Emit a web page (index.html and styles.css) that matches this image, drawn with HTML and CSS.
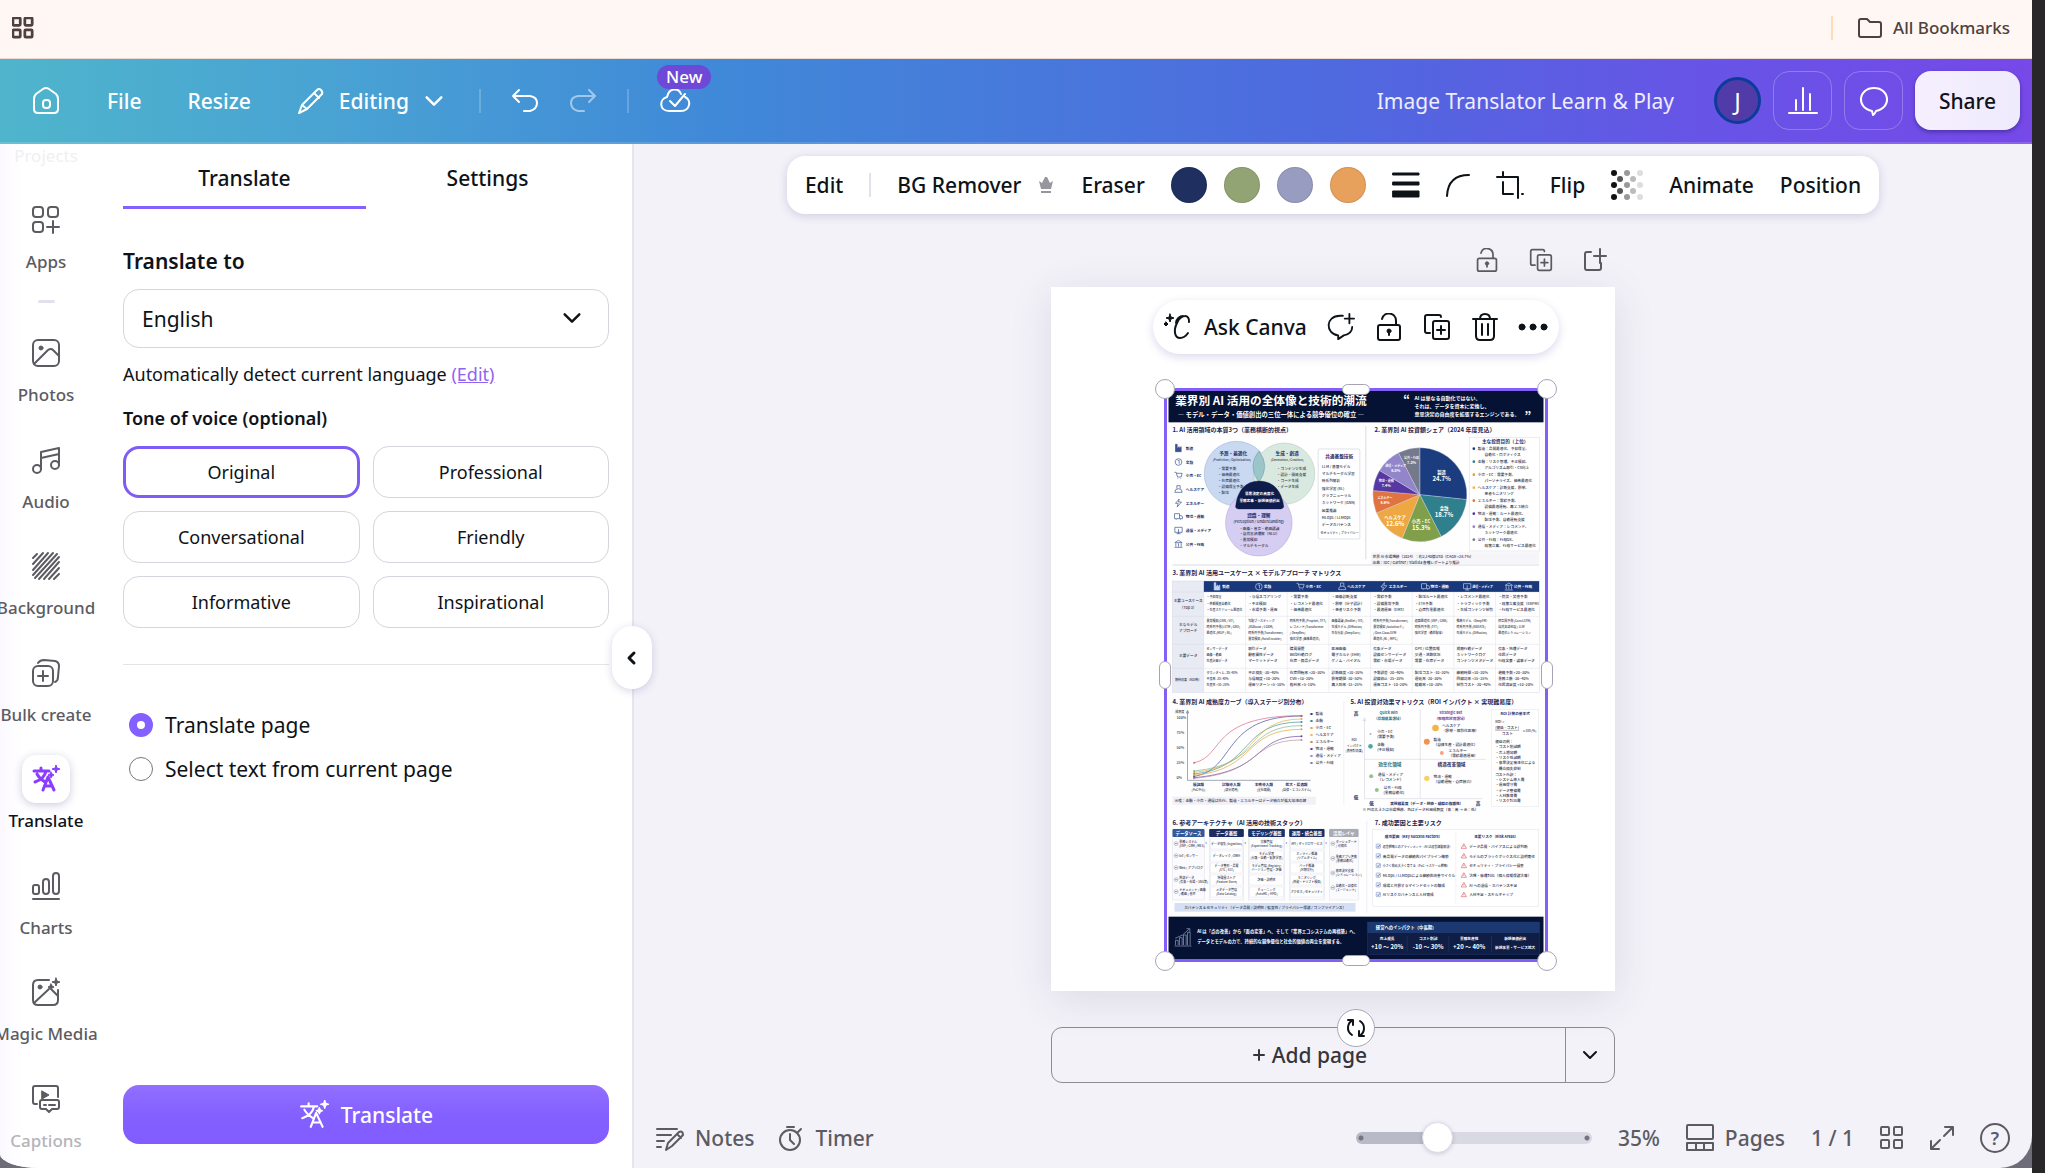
FILE: index.html
```html
<!DOCTYPE html>
<html lang="en">
<head>
    <meta charset="UTF-8">
    <meta name="viewport" content="width=device-width, initial-scale=1.0">
    <title>Image Translator Learn &amp; Play</title>
    <link rel="stylesheet" href="styles.css">
</head>
<body>
    <!-- Shared icons -->
    <svg class="sprite" aria-hidden="true">
        <symbol id="i-translate" viewBox="0 0 28 28">
            <path d="M2 6h15M9 3v3M14 6c-1 5-5 9-11 11M5 9c2 4 5 6 8 8M11 25l5-13 6 13M13 21h7"/>
            <path class="fill" d="M24 0l1 3 3 1-3 1-1 3-1-3-3-1 3-1zM19 7l1 2 2 1-2 1-1 2-1-2-2-1 2-1z"/>
        </symbol>
        <symbol id="i-chevron" viewBox="0 0 18 18"><path d="M3 6l6 6 6-6"/></symbol>
        <symbol id="i-lock" viewBox="0 0 28 28">
            <rect x="3" y="12" width="22" height="15" rx="2"/>
            <path d="M7 6c2-8 14-7 14 2v4M14 19v3"/><circle class="fill" cx="14" cy="18" r="2"/>
        </symbol>
        <symbol id="i-copy" viewBox="0 0 28 28">
            <path d="M7 20H4q-2 0-2-2V4q0-2 2-2h12q2 0 2 2"/>
            <rect x="10" y="8" width="16" height="18" rx="2"/><path d="M18 13v8M14 17h8"/>
        </symbol>
        <symbol id="i-grid" viewBox="0 0 24 24">
            <rect x="1" y="1" width="8" height="8" rx="1"/><rect x="14" y="1" width="8" height="8" rx="1"/>
            <rect x="1" y="14" width="8" height="8" rx="1"/><rect x="14" y="14" width="8" height="8" rx="1"/>
        </symbol>
    </svg>

    <div class="screen">
        <div class="bookmarks">
            <button class="plain" aria-label="Apps"><svg class="icon bold s22"><use href="#i-grid"/></svg></button>
            <button class="plain all-bookmarks">
                <svg class="icon s26" viewBox="0 0 26 26"><path d="M2 6q0-2 2-2h6l3 3h9q2 0 2 2v11q0 2-2 2H4q-2 0-2-2z"/></svg>
                All Bookmarks
            </button>
        </div>

        <div class="window">
            <!-- Header -->
            <header class="header">
                <nav class="menu">
                    <button class="plain" aria-label="Home"><svg class="icon s30" viewBox="0 0 30 30"><path d="M3 13q0-3 2-5l7-5q3-2 6 0l7 5q2 2 2 5v10q0 4-4 4H7q-4 0-4-4z"/><rect x="12" y="14" width="7" height="8" rx="3"/></svg></button>
                    <button class="plain">File</button>
                    <button class="plain">Resize</button>
                    <button class="plain editing">
                        <svg class="icon s28" viewBox="0 0 28 28"><path d="M2 26l3-8L20 3q2-2 4 0t1 4L10 22zM17 6l5 5M5 18l5 4"/></svg>
                        Editing
                        <svg class="icon s22"><use href="#i-chevron"/></svg>
                    </button>
                </nav>
                <div class="history">
                    <span class="line"></span>
                    <button class="plain" aria-label="Undo"><svg class="icon s28" viewBox="0 0 28 28"><path d="M8 3L2 9l6 6M2 9h17q7 1 7 7t-7 8h-6"/></svg></button>
                    <button class="plain dim" aria-label="Redo"><svg class="icon s28" viewBox="0 0 28 28"><path d="M20 3l6 6-6 6M26 9H9q-7 1-7 7t7 8h6"/></svg></button>
                    <span class="line"></span>
                    <button class="plain saved" aria-label="Saved">
                        <svg class="icon s32" viewBox="0 0 32 32"><path d="M22 9C20 3 10 2 8 12c-8 2-8 14 2 14h12c9 0 11-11 4-14M11 16l5 5 10-12"/></svg>
                        <span class="badge">New</span>
                    </button>
                </div>
                <div class="account">
                    <span class="doc-title">Image Translator Learn &amp; Play</span>
                    <button class="avatar">J</button>
                    <button class="outline" aria-label="Insights"><svg class="icon s30" viewBox="0 0 30 30"><path d="M1 27h28M8 24V14M15 24V2M22 24V8"/></svg></button>
                    <button class="outline" aria-label="Comments"><svg class="icon s30" viewBox="0 0 30 30"><path d="M13 25C-3 22-1 2 15 2s18 20 2 23q-1 3-3 4z"/></svg></button>
                    <button class="share">Share</button>
                </div>
            </header>

            <div class="workspace">
                <!-- Rail -->
                <nav class="rail">
                    <span class="rail-faded">Projects</span>
                    <button class="rail-item">
                        <span class="tile"><svg class="icon s28" viewBox="0 0 28 28"><rect x="1" y="1" width="10" height="10" rx="3"/><rect x="16" y="1" width="10" height="10" rx="3"/><rect x="1" y="16" width="10" height="10" rx="3"/><path d="M21 15v12M15 21h12"/></svg></span>
                        Apps
                    </button>
                    <span class="rail-dash"></span>
                    <div class="rail-list">
                        <button class="rail-item">
                            <span class="tile"><svg class="icon s28" viewBox="0 0 28 28"><rect x="1" y="1" width="26" height="26" rx="5"/><circle class="fill" cx="9" cy="9" r="2"/><path d="M2 25L16 11q3-2 5 0l6 6"/></svg></span>
                            Photos
                        </button>
                        <button class="rail-item">
                            <span class="tile"><svg class="icon s28" viewBox="0 0 28 28"><circle cx="5" cy="23" r="4"/><circle cx="23" cy="19" r="4"/><path d="M9 23V6l18-4v17M9 12l18-4"/></svg></span>
                            Audio
                        </button>
                        <button class="rail-item">
                            <span class="tile"><svg class="icon s28" viewBox="0 0 28 28"><path d="M1 6l4-4M1 12L11 1M1 18L16 1M1 23L21 1M3 26L25 2M7 27L27 5M12 27l15-17M17 27l10-11M22 27l5-5"/></svg></span>
                            Background
                        </button>
                        <button class="rail-item">
                            <span class="tile"><svg class="icon s28" viewBox="0 0 28 28"><rect x="1" y="7" width="20" height="20" rx="5"/><path d="M6 4q2-3 6-3l11 1q4 1 4 5l-1 11q0 4-3 5M11 12v10M6 17h10"/></svg></span>
                            Bulk create
                        </button>
                        <button class="rail-item active">
                            <span class="tile"><svg class="icon bold s28"><use href="#i-translate"/></svg></span>
                            Translate
                        </button>
                        <button class="rail-item">
                            <span class="tile"><svg class="icon s28" viewBox="0 0 28 28"><rect x="1" y="13" width="6" height="9" rx="2"/><rect x="11" y="7" width="6" height="15" rx="3"/><rect x="21" y="1" width="6" height="21" rx="3"/><path d="M1 27h26"/></svg></span>
                            Charts
                        </button>
                        <button class="rail-item">
                            <span class="tile"><svg class="icon s28" viewBox="0 0 28 28"><path d="M17 2H6Q1 2 1 7v15q0 5 5 5h15q5 0 5-5V12M2 25l15-14M20 12l6 6"/><circle class="fill" cx="8" cy="9" r="2"/><path class="fill" d="M24 0l1 3 3 1-3 1-1 3-1-3-3-1 3-1zM19 6l1 2 2 1-2 1-1 2-1-2-2-1 2-1z"/></svg></span>
                            Magic Media
                        </button>
                        <button class="rail-item faded">
                            <span class="tile"><svg class="icon s28" viewBox="0 0 28 28"><path d="M5 19H3q-2 0-2-2V3q0-2 2-2h21q2 0 2 2v9"/><path class="fill" d="M10 6l7 4-7 4z"/><path d="M10 15h15q2 0 2 2v5q0 2-2 2h-5l-3 3-3-3h-4q-2 0-2-2v-5q0-2 2-2zM12 20h2M17 20h6"/></svg></span>
                            Captions
                        </button>
                    </div>
                </nav>

                <!-- Translate panel -->
                <section class="panel">
                    <div class="tabs">
                        <button class="tab selected">Translate</button>
                        <button class="tab">Settings</button>
                    </div>
                    <label class="field-label" for="language">Translate to</label>
                    <div class="select-wrap">
                        <select id="language">
                            <option>English</option>
                        </select>
                        <svg class="icon s22"><use href="#i-chevron"/></svg>
                    </div>
                    <p class="detect">Automatically detect current language <a href="#edit">(Edit)</a></p>
                    <h3 class="tone-title">Tone of voice (optional)</h3>
                    <div class="tones">
                        <button class="tone chosen">Original</button>
                        <button class="tone">Professional</button>
                        <button class="tone">Conversational</button>
                        <button class="tone">Friendly</button>
                        <button class="tone">Informative</button>
                        <button class="tone">Inspirational</button>
                    </div>
                    <div class="scope">
                        <label><input type="radio" name="scope" checked> Translate page</label>
                        <label><input type="radio" name="scope"> Select text from current page</label>
                    </div>
                    <button class="translate-button">
                        <svg class="icon s30"><use href="#i-translate"/></svg>
                        Translate
                    </button>
                    <button class="collapse" aria-label="Hide panel"><svg class="icon bold s18" viewBox="0 0 18 18"><path d="M11 4L6 9l5 5"/></svg></button>
                </section>

                <!-- Canvas -->
                <main class="canvas">
                    <div class="toolbar">
                        <button class="plain">Edit</button>
                        <span class="line"></span>
                        <button class="plain remover">BG Remover
                            <svg class="crown" viewBox="0 0 16 18"><path d="M1 5l3 2 3-6h2l3 6 3-2-2 8H3zM3 15h10v2H3z"/></svg>
                        </button>
                        <button class="plain">Eraser</button>
                        <div class="swatches">
                            <button class="swatch navy" aria-label="Navy"></button>
                            <button class="swatch green" aria-label="Green"></button>
                            <button class="swatch lilac" aria-label="Lilac"></button>
                            <button class="swatch orange" aria-label="Orange"></button>
                        </div>
                        <button class="plain" aria-label="Line weight"><svg class="icon s28" viewBox="0 0 28 28"><path class="fill" d="M1 2h26v2H1zM1 11h26v3H1zM1 20h26v6H1z"/></svg></button>
                        <button class="plain" aria-label="Corners"><svg class="icon s24" viewBox="0 0 24 24"><path d="M1 23Q2 2 23 2"/></svg></button>
                        <button class="plain" aria-label="Crop"><svg class="icon s28" viewBox="0 0 28 28"><path d="M1 6h21v21M7 1v4M7 11v12h10M26 23h1"/></svg></button>
                        <button class="plain">Flip</button>
                        <button class="plain" aria-label="Transparency"><svg class="checker" viewBox="0 0 32 32">
                            <g fill="#111"><circle cx="3" cy="4" r="3"/><circle cx="3" cy="16" r="3"/><circle cx="3" cy="28" r="3"/></g>
                            <g fill="#555"><circle cx="9" cy="10" r="3"/><circle cx="9" cy="22" r="3"/></g>
                            <g fill="#999"><circle cx="16" cy="4" r="3"/><circle cx="16" cy="16" r="3"/><circle cx="16" cy="28" r="3"/></g>
                            <g fill="#bbb"><circle cx="22" cy="10" r="3"/><circle cx="22" cy="22" r="3"/></g>
                            <g fill="#ddd"><circle cx="29" cy="4" r="3"/><circle cx="29" cy="16" r="3"/><circle cx="29" cy="28" r="3"/></g>
                        </svg></button>
                        <button class="plain">Animate</button>
                        <button class="plain">Position</button>
                    </div>

                    <div class="board">
                        <div class="page-tools">
                            <button class="plain" aria-label="Lock page"><svg class="icon s24"><use href="#i-lock"/></svg></button>
                            <button class="plain" aria-label="Duplicate page"><svg class="icon s24"><use href="#i-copy"/></svg></button>
                            <button class="plain" aria-label="New page"><svg class="icon s24" viewBox="0 0 24 24"><path d="M8 4H4Q2 4 2 6v14q0 2 2 2h12q2 0 2-2v-5M17 1v14M11 8h12"/></svg></button>
                        </div>

                        <div class="artboard">
                            <div class="quick-bar">
                                <button class="plain ask">
                                    <svg class="icon bold s28" viewBox="0 0 28 28"><path d="M26 9c1-8-8-8-12 1-4 8-2 15 3 15 4 0 6-2 8-5M20 3c-3 0-7 3-7 7"/><path class="fill" d="M7 1l1 3 3 1-3 1-1 3-1-3-3-1 3-1zM3 9l1 1 1 1-1 1-1 1-1-1-1-1 1-1z"/></svg>
                                    Ask Canva
                                </button>
                                <button class="plain" aria-label="Comment"><svg class="icon bold s28" viewBox="0 0 30 30"><path d="M17 3H14C-2 3-2 22 12 24v4l6-4q9-2 9-9M24 1v10M19 6h10"/></svg></button>
                                <button class="plain" aria-label="Lock"><svg class="icon bold s28"><use href="#i-lock"/></svg></button>
                                <button class="plain" aria-label="Duplicate"><svg class="icon bold s28"><use href="#i-copy"/></svg></button>
                                <button class="plain" aria-label="Delete"><svg class="icon bold s28" viewBox="0 0 28 28"><path d="M2 6h24M9 6q0-5 5-5t5 5M5 6v17q0 4 4 4h10q4 0 4-4V6M11 11v11M17 11v11"/></svg></button>
                                <button class="plain" aria-label="More"><svg class="icon s28" viewBox="0 0 28 28"><g class="fill"><circle cx="3" cy="14" r="3"/><circle cx="14" cy="14" r="3"/><circle cx="25" cy="14" r="3"/></g></svg></button>
                            </div>

                            <div class="selection">
                                <svg class="poster" id="poster" viewBox="0 0 1125 1704"></svg>
                                <span class="handle nw"></span><span class="handle ne"></span>
                                <span class="handle sw"></span><span class="handle se"></span>
                                <span class="pill top"></span><span class="pill bottom"></span>
                                <span class="pill left"></span><span class="pill right"></span>
                                <button class="rotate" aria-label="Rotate"><svg class="icon s20" viewBox="0 0 20 20"><path d="M2 2h5v5M7 2C1 5 0 13 6 17M18 18h-5v-5M13 18c6-3 7-11 1-15"/></svg></button>
                            </div>
                        </div>

                        <div class="add-page">
                            <button class="add"><svg class="icon s18" viewBox="0 0 18 18"><path d="M9 4v10M4 9h10"/></svg>Add page</button>
                            <button class="add-more" aria-label="Page types"><svg class="icon s18"><use href="#i-chevron"/></svg></button>
                        </div>
                    </div>

                    <footer class="status">
                        <button class="plain"><svg class="icon s28" viewBox="0 0 28 28"><path d="M1 5h20M1 11h14M1 17h7M1 23h4M10 26l2-7L23 8q2-1 3 0t1 3L16 22zM21 10l4 4"/></svg>Notes</button>
                        <button class="plain"><svg class="icon s26" viewBox="0 0 26 26"><circle cx="12" cy="15" r="10"/><path d="M9 2h7M20 7l3-3M12 9v6l4 4"/></svg>Timer</button>
                        <div class="status-right">
                            <input class="zoom" type="range" min="0" max="100" value="32" aria-label="Zoom">
                            <button class="plain">35%</button>
                            <button class="plain"><svg class="icon s28" viewBox="0 0 28 28"><rect x="1" y="1" width="26" height="14" rx="1"/><path d="M1 19h26v7H1zM10 19v7M18 19v7"/></svg>Pages</button>
                            <button class="plain">1 / 1</button>
                            <button class="plain" aria-label="Grid view"><svg class="icon s24"><use href="#i-grid"/></svg></button>
                            <button class="plain" aria-label="Full screen"><svg class="icon s24" viewBox="0 0 24 24"><path d="M15 1h8v8M23 1l-9 9M9 23H1v-8M1 23l9-9"/></svg></button>
                            <button class="help" aria-label="Help">?</button>
                        </div>
                    </footer>
                </main>
            </div>
        </div>
    </div>
    <script src="poster.js"></script>
</body>
</html>
```
FILE: styles.css
```css
* {
    box-sizing: border-box;
}
body {
    margin: 0;
    height: 100vh;
    font-family: "Noto Sans", "Noto Sans CJK JP", sans-serif;
    font-size: 21px;
    color: #0e1318;
    background-color: #fff;
    border-right: 13px solid #29272a;
    overflow: hidden;
}
button, select, input {
    font: inherit;
    color: inherit;
    margin: 0;
}
button {
    display: flex;
    align-items: center;
    justify-content: center;
    padding: 0;
    border: none;
    background: none;
    cursor: pointer;
    white-space: nowrap;
}
.plain {
    font-weight: 500;
}
.sprite {
    display: none;
}
.icon {
    display: block;
    flex: none;
    fill: none;
    stroke: currentColor;
    stroke-width: 2px;
    stroke-linecap: round;
    stroke-linejoin: round;
    overflow: visible;
}
.fill {
    fill: currentColor;
    stroke-width: 1px;
}
.bold {
    stroke-width: 3px;
}
.s18 { width: 18px; height: 18px; }
.s20 { width: 20px; height: 20px; }
.s22 { width: 22px; height: 22px; }
.s24 { width: 24px; height: 24px; }
.s26 { width: 26px; height: 26px; }
.s28 { width: 28px; height: 28px; }
.s30 { width: 30px; height: 30px; }
.s32 { width: 32px; height: 32px; }

.screen {
    display: flex;
    flex-direction: column;
    height: 100%;
    padding-bottom: 5px;
    background-color: #fff;
}
.bookmarks {
    display: flex;
    align-items: center;
    justify-content: space-between;
    height: 59px;
    padding: 0 22px 3px 12px;
    background-color: #fff7f3;
    border-bottom: 1px solid #ecd9d0;
    color: #4e4140;
}
.all-bookmarks {
    gap: 10px;
    height: 24px;
    padding-left: 24px;
    border-left: 2px solid #ffdcb8;
    font-size: 17px;
}
.window {
    flex: 1;
    display: flex;
    flex-direction: column;
    min-height: 0;
    background-color: #6d6c78;
}

/* Header */
.header {
    display: flex;
    align-items: center;
    height: 85px;
    padding: 0 12px 0 31px;
    color: #fff;
    background: linear-gradient(90deg, #4fb5cc 0%, #49a3d3 16%, #4089d8 35%, #4f69df 66%, #6754e6 84%, #7649e8 100%);
    border-bottom: 2px solid rgba(255, 255, 255, 0.15);
}
.menu {
    display: flex;
    align-items: center;
    gap: 46px;
}
.editing {
    gap: 14px;
}
.history {
    display: flex;
    align-items: center;
    gap: 30px;
    margin-left: 34px;
}
.line {
    width: 2px;
    height: 24px;
    background-color: rgba(255, 255, 255, 0.2);
}
.dim {
    opacity: 0.5;
}
.saved {
    position: relative;
}
.badge {
    position: absolute;
    left: -2px;
    bottom: 28px;
    padding: 0 9px;
    border-radius: 12px;
    background-color: #6e48d6;
    font-size: 17px;
    line-height: 24px;
}
.account {
    display: flex;
    align-items: center;
    gap: 12px;
    margin-left: auto;
}
.doc-title {
    margin-right: 28px;
    color: #f0edff;
}
.avatar {
    width: 47px;
    height: 47px;
    border: 3px solid #0b3c9c;
    border-radius: 50%;
    background-color: #503ba8;
    font-size: 24px;
}
.outline {
    width: 59px;
    height: 59px;
    border: 1px solid rgba(255, 255, 255, 0.25);
    border-radius: 16px;
}
.share {
    width: 105px;
    height: 59px;
    border-radius: 16px;
    background: linear-gradient(90deg, #f6effe, #eeebfd);
    box-shadow: 0 2px 4px rgba(20, 10, 80, 0.4);
    color: #0e1318;
    font-weight: 500;
}

.workspace {
    flex: 1;
    display: flex;
    min-height: 0;
    border-radius: 0 0 32px 40px / 0 0 32px 14px;
    overflow: hidden;
    background-color: #f3f2f9;
}

/* Rail */
.rail {
    display: flex;
    flex-direction: column;
    align-items: center;
    width: 98px;
    padding: 0 6px 15px 0;
    background: linear-gradient(90deg, #fbf9ff, #fff 24px);
    overflow: hidden;
}
.rail-faded {
    font-size: 17px;
    line-height: 24px;
    color: #f0eff2;
}
.rail-item {
    flex-direction: column;
    gap: 6px;
    font-size: 17px;
    font-weight: 500;
    line-height: 24px;
    color: #5c5b62;
}
.rail > .rail-item {
    margin-top: 28px;
}
.tile {
    display: flex;
    align-items: center;
    justify-content: center;
    width: 48px;
    height: 48px;
    border-radius: 14px;
}
.rail-dash {
    width: 17px;
    height: 3px;
    margin: 26px 0;
    border-radius: 2px;
    background-color: #e2e0ea;
}
.rail-list {
    flex: 1;
    display: flex;
    flex-direction: column;
    align-items: center;
    justify-content: space-between;
}
.active {
    color: #0e1318;
}
.active .tile {
    color: #8b3dff;
    background-color: #fff;
    box-shadow: 0 2px 8px rgba(60, 50, 130, 0.25);
}
.faded {
    color: #b5b4ba;
}
.faded .tile {
    color: #5c5b62;
}

/* Panel */
.panel {
    position: relative;
    z-index: 2;
    display: flex;
    flex-direction: column;
    width: 536px;
    padding: 0 23px 24px 25px;
    background-color: #fff;
    border-right: 2px solid #e6e5ed;
}
.tabs {
    display: grid;
    grid-template-columns: 1fr 1fr;
    height: 65px;
}
.tab {
    padding-top: 6px;
    font-weight: 500;
    border-bottom: 3px solid transparent;
}
.selected {
    border-color: #8360ff;
}
.field-label {
    margin: 38px 0 14px;
    line-height: 28px;
    font-weight: 600;
}
.select-wrap {
    position: relative;
}
.select-wrap select {
    width: 100%;
    height: 59px;
    padding: 0 18px;
    appearance: none;
    background-color: #fff;
    border: 1px solid #d6d5dd;
    border-radius: 16px;
}
.select-wrap .icon {
    position: absolute;
    right: 26px;
    top: 18px;
    pointer-events: none;
}
.detect {
    margin: 14px 0 20px;
    font-size: 18px;
    line-height: 24px;
}
.detect a {
    color: #9063f2;
}
.tone-title {
    margin: 0 0 16px;
    font-size: 18px;
    line-height: 24px;
    font-weight: 600;
}
.tones {
    display: grid;
    grid-template-columns: 1fr 1fr;
    gap: 13px;
    padding-bottom: 36px;
    border-bottom: 1px solid #e4e4e8;
}
.tone {
    height: 52px;
    border: 1px solid #d6d5dd;
    border-radius: 16px;
    font-size: 18px;
}
.chosen {
    border: 3px solid #7f5cf5;
}
.scope {
    display: flex;
    flex-direction: column;
    gap: 16px;
    padding: 46px 6px;
    line-height: 28px;
}
.scope label {
    display: flex;
    align-items: center;
    gap: 12px;
}
.scope input {
    width: 24px;
    height: 24px;
    appearance: none;
    border: 1px solid #77767e;
    border-radius: 50%;
}
.scope input:checked {
    border: 8px solid #8360ff;
}
.translate-button {
    gap: 12px;
    height: 59px;
    margin-top: auto;
    border-radius: 16px;
    background: linear-gradient(#9370ff, #8360ff 50%, #825cff);
    color: #fff;
    font-weight: 500;
}
.collapse {
    position: absolute;
    right: -20px;
    top: 482px;
    width: 40px;
    height: 63px;
    border-radius: 20px;
    background-color: #fff;
    box-shadow: 0 2px 8px rgba(60, 50, 130, 0.2);
}

/* Canvas */
.canvas {
    flex: 1;
    display: flex;
    flex-direction: column;
    align-items: center;
    min-width: 0;
    padding: 12px 22px 14px;
}
.toolbar {
    display: flex;
    align-items: center;
    gap: 26px;
    height: 58px;
    padding: 0 18px;
    border-radius: 18px;
    background-color: #fff;
    box-shadow: 0 2px 10px rgba(60, 60, 130, 0.2);
}
.toolbar .line {
    background-color: #e2e2e8;
}
.remover {
    gap: 16px;
}
.crown {
    width: 18px;
    height: 18px;
    fill: #97969f;
}
.swatches {
    display: flex;
    gap: 17px;
}
.swatch {
    width: 36px;
    height: 36px;
    border: 1px solid rgba(0, 0, 0, 0.1);
    border-radius: 50%;
}
.navy { background-color: #1f3060; }
.green { background-color: #93a474; }
.lilac { background-color: #979cc0; }
.orange { background-color: #e8a15c; }
.checker {
    width: 32px;
    height: 32px;
}
.board {
    width: 564px;
}
.page-tools {
    display: flex;
    justify-content: flex-end;
    gap: 30px;
    padding: 34px 8px 15px;
    color: #5c5b62;
}
.artboard {
    position: relative;
    height: 704px;
    background-color: #fff;
    box-shadow: 0 8px 40px rgba(60, 60, 80, 0.12);
}
.quick-bar {
    position: absolute;
    left: 102px;
    top: 13px;
    z-index: 3;
    display: flex;
    align-items: center;
    gap: 20px;
    height: 54px;
    padding: 0 12px 0 10px;
    border-radius: 27px;
    background-color: #fff;
    box-shadow: 0 3px 10px rgba(80, 60, 160, 0.2);
}
.quick-bar .bold {
    stroke-width: 2px;
}
.ask {
    gap: 13px;
}
.selection {
    position: absolute;
    left: 113px;
    top: 101px;
    z-index: 2;
    border: 3px solid #8360f5;
}
.poster {
    display: block;
    width: 378px;
    height: 568px;
    background-color: #fefefe;
}
.handle, .pill {
    position: absolute;
    background-color: #fff;
    border: 1px solid #a6a4b4;
    border-radius: 10px;
}
.handle {
    width: 20px;
    height: 20px;
}
.nw { left: -12px; top: -12px; }
.ne { right: -12px; top: -12px; }
.sw { left: -12px; bottom: -12px; }
.se { right: -12px; bottom: -12px; }
.top, .bottom {
    left: calc(50% - 14px);
    width: 28px;
    height: 11px;
}
.top { top: -7px; }
.bottom { bottom: -7px; }
.left, .right {
    top: calc(50% - 14px);
    width: 12px;
    height: 28px;
}
.left { left: -8px; }
.right { right: -8px; }
.rotate {
    position: absolute;
    left: calc(50% - 19px);
    bottom: -88px;
    width: 38px;
    height: 38px;
    border: 1px solid #aaa8b8;
    border-radius: 50%;
    background-color: #fff;
}
.add-page {
    display: flex;
    height: 56px;
    margin-top: 36px;
    border: 1px solid #8d8b96;
    border-radius: 11px;
}
.add {
    flex: 1;
    gap: 4px;
    font-weight: 500;
    color: #36353c;
}
.add-more {
    width: 49px;
    border-left: 1px solid #8d8b96;
}

/* Status bar */
.status {
    display: flex;
    align-items: center;
    gap: 24px;
    width: 100%;
    margin-top: auto;
    color: #5c5b62;
}
.status .plain {
    gap: 11px;
}
.status-right {
    display: flex;
    align-items: center;
    gap: 26px;
    margin-left: auto;
}
.zoom {
    width: 236px;
    height: 32px;
    appearance: none;
    background: none;
}
.zoom::-webkit-slider-runnable-track {
    height: 12px;
    border-radius: 6px;
    background:
        radial-gradient(circle at 5px 6px, #74737e 2px, transparent 3px),
        radial-gradient(circle at 231px 6px, #74737e 2px, transparent 3px),
        linear-gradient(90deg, #b9bac7 35%, #d9d9e3 35%);
}
.zoom::-webkit-slider-thumb {
    appearance: none;
    width: 31px;
    height: 31px;
    margin-top: -10px;
    border: 1px solid #dddde6;
    border-radius: 50%;
    background-color: #fff;
    box-shadow: 0 1px 4px rgba(50, 50, 90, 0.2);
}
.help {
    width: 30px;
    height: 30px;
    border: 2px solid #5c5b62;
    border-radius: 50%;
    font-size: 18px;
    font-weight: 600;
}

/* Poster artwork */
.poster text {
    font-family: "Noto Sans CJK JP", sans-serif;
    font-size: 13px;
    font-weight: 500;
    fill: #33364d;
}
.poster .h { font-size: 18px; font-weight: 700; fill: #1c2350; }
.poster .b { font-size: 14px; font-weight: 700; fill: #1c2c66; }
.poster .s { font-size: 11px; }
.poster .xs { font-size: 9px; }
.poster .w { font-weight: 700; fill: #fff; }
.poster .title { font-size: 35px; }
.poster .sub { font-size: 19px; }
.poster .big { font-size: 18px; }
.poster .quote { font-size: 15px; }
.poster .mid { text-anchor: middle; }
.poster .teal { fill: #28717e; }
.poster .purple { fill: #7445a4; }
```
FILE: poster.js
```js
const poster = document.getElementById("poster");
const NS = "http://www.w3.org/2000/svg";
const sectors = ["製造", "金融", "小売・EC", "ヘルスケア", "エネルギー", "物流・運輸", "通信・メディア", "公共・行政"];
const colors = ["#17388a", "#2b7f92", "#d8a13c", "#f5b13d", "#e2703a", "#5131a5", "#9080cf", "#747a8c"];

function add(tag, attrs, content) {
    const el = document.createElementNS(NS, tag);
    for (const key in attrs) el.setAttribute(key, attrs[key]);
    if (content) el.textContent = content;
    poster.appendChild(el);
}
function rect(x, y, width, height, fill, stroke = "none", rx = 0) {
    add("rect", { x, y, width, height, fill, stroke, rx });
}
function circle(cx, cy, r, fill, stroke = "none") {
    add("circle", { cx, cy, r, fill, stroke });
}
function path(d, stroke, width = 1, fill = "none") {
    add("path", { d, stroke, fill, "stroke-width": width });
}
// Writes one line of text per entry, step units apart
function text(x, y, lines, cls = "", step = 20) {
    [].concat(lines).forEach((line, i) => add("text", { x, y: y + i * step, class: cls }, line));
}
// One line icon per sector, centred on x, y
function sectorIcon(i, x, y, color) {
    const shapes = [
        "M-9 10v-22h5v12l6-5v5l6-5v15z",
        "M-10 0a10 10 0 1 0 20 0a10 10 0 1 0 -20 0M-3-5h5v10",
        "M-12-10h5l4 14H8l3-11H-6M-3 9h2M6 9h2",
        "M-5-2v-9H5v9M-11 9Q-11-2 0-2T11 9z",
        "M2-12L-9 1h8l-3 11L9-3H0z",
        "M-12-9H3V6h-15zM3-3h6l3 4v5H3M-7 8v2M6 8v2",
        "M-11-9h22V6h-22zM0-4v14M-6 10H6",
        "M-11-4L0-11l11 7zM-8-2V8M0-2V8M8-2V8M-12 10h24"
    ];
    add("path", { d: shapes[i], stroke: color, fill: i === 0 ? color : "none", "stroke-width": 2, transform: `translate(${x} ${y})` });
}

// Banner
rect(0, 0, 1125, 94, "#061234");
text(20, 43, "業界別 AI 活用の全体像と技術的潮流", "w title");
text(28, 79, "― モデル・データ・価値創出の三位一体による競争優位の確立 ―", "w sub");
text(704, 38, "“", "w title");
text(738, 27, ["AI は単なる自動化ではない。", "それは、データを資本に変換し、", "意思決定の自由度を拡張するエンジンである。"], "w quote", 24);
text(1068, 88, "”", "w title");

// 1. Venn diagram
text(12, 123, "1. AI 活用領域の本質3つ（業務横断的視点）", "h");
sectors.forEach((name, i) => {
    const y = 172 + i * 41;
    text(52, y + 5, name, "b s");
    sectorIcon(i, 30, y, "#38508f");
});
circle(204, 248, 97, "#c9d9f2", "#7992bd");
circle(347, 248, 92, "#d9e9df", "#8fb3a0");
circle(271, 395, 100, "#d6cdf2", "#9383c5");
path("M271 180q-36 45 0 94q36-49 0-94", "#4f8299", 1, "#9cc5ca");
path("M201 348q8-76 71-78q64 2 74 78q-4 6-10 6h-125q-8 0-10-6", "#0d1c4a", 1, "#0d1c4a");
text(194, 192, "予測・最適化", "b mid");
text(190, 209, "(Prediction / Optimization)", "xs mid");
text(148, 237, ["・需要予測", "・価格最適化", "・在庫最適化", "・設備保全予測", "・配送"], "s", 18);
text(356, 192, "生成・創造", "b mid");
text(356, 209, "(Generation / Creation)", "xs mid");
text(325, 237, ["・コンテンツ生成", "・設計・開発支援", "・コード生成", "・データ生成"], "s", 18);
text(273, 312, ["意思決定の高度化", "業務変革・新規価値創出"], "w mid s", 22);
text(271, 378, "認識・理解", "b mid");
text(271, 396, "(Perception / Understanding)", "s mid");
text(212, 416, ["・画像・音声・動画認識", "・自然言語理解（NLU）", "・異常検知", "・マルチモーダル"], "s", 17);
rect(449, 174, 125, 270, "#fff", "#9aa9c8", 4);
text(512, 201, "共通基盤技術", "b mid");
text(460, 230, ["LLM / 基盤モデル", "マルチモーダル学習", "時系列解析", "強化学習 (RL)", "グラフニューラル", "ネットワーク (GNN)", "因果推論", "MLOps / LLMOps", "データガバナンス"], "s", 22);
text(456, 428, "セキュリティ / プライバシー", "xs");
path("M592 105v400M12 522h1100", "#c9cbd8", 2);

// 2. Pie chart
text(618, 123, "2. 業界別 AI 投資額シェア（2024 年度見込）", "h");
const stops = [0, 96, 153, 202, 247, 275, 301, 333, 360];
const pieColors = ["#1b3d80", "#2f7f8c", "#7f9f4b", "#eda843", "#e07440", "#5638a3", "#9285c9", "#747a8c"];
const shares = ["24.7%", "18.7%", "15.3%", "12.6%", "8.6%", "7.4%", "6.0%", "7.2%"];
const point = (deg, r) => {
    const rad = deg * Math.PI / 180;
    return [754 + r * Math.sin(rad), 311 - r * Math.cos(rad)];
};
pieColors.forEach((fill, i) => {
    const a = point(stops[i], 141);
    const b = point(stops[i + 1], 141);
    path(`M754 311L${a}A141 141 0 0 1 ${b}z`, "#d9dced", 1, fill);
});
pieColors.forEach((fill, i) => {
    const [x, y] = point((stops[i] + stops[i + 1]) / 2, i < 3 ? 88 : 106);
    text(x, y - 4, sectors[i], i < 4 ? "w mid" : "w mid xs");
    text(x, y + (i < 4 ? 18 : 10), shares[i], i < 4 ? "w mid big" : "w mid s");
});
rect(903, 139, 209, 341, "#fff", "#c5c9d8");
text(1010, 156, "主な投資目的（上位）", "b mid");
const goals = [
    ["品質最適化、予知保全、", "自動化・ロボティクス"], ["リスク管理、不正検知、", "アルゴリズム取引・CX向上"],
    ["需要予測、", "パーソナライズ、価格最適化"], ["診断支援、創薬、", "患者モニタリング"],
    ["需給予測、", "設備最適運転、再エネ統合"], ["ルート最適化、", "配送予測、自動運転支援"],
    ["レコメンド、", "ネットワーク最適化"], ["行政DX、", "政策立案、行政サービス最適化"]
];
goals.forEach((goal, i) => {
    const y = 178 + i * 39;
    circle(916, y - 5, 4, colors[i]);
    text(928, y, sectors[i] + "：" + goal[0], "s");
    text(948, y + 16, goal[1], "s");
});
rect(608, 484, 504, 36, "#f5f5fa");
text(612, 501, ["世界 AI 市場規模（2024）：約2,140億USD（CAGR +28.7%）", "出典：IDC / Gartner / Statista 各種レポートより推計"], "s", 17);

// 3. Use case matrix
text(12, 551, "3. 業界別 AI 活用ユースケース × モデルアプローチ マトリクス", "h");
rect(12, 570, 94, 334, "#e8eaf4");
rect(106, 570, 1006, 33, "#19377b");
const rowTops = [603, 676, 760, 832];
text(59, 633, ["主要ユースケース", "（Top 3）"], "s mid");
text(59, 704, ["主なモデル", "アプローチ"], "s mid", 18);
text(59, 799, "主要データ", "s mid");
text(59, 871, "期待効果（ROI例）", "xs mid");
const matrix = [
    [["予知保全", "外観検査自動化", "生産スケジュール最適化"], ["異常検知(CNN / ViT)", "時系列予測(LSTM / GRU)", "最適化 (MILP / RL)"], ["センサーデータ", "画像・動画", "生産計画データ"], ["ダウンタイム -30~40%", "不良率 -20~40%", "生産性 +10~20%"]],
    [["与信スコアリング", "不正検知", "市場予測・運用"], ["勾配ブースティング", "(XGBoost / LGBM)", "時系列予測(Transformer)", "異常検知 (AutoEncoder)"], ["取引データ", "顧客属性データ", "マーケットデータ"], ["不正損失 -30~40%", "与信精度 +10~20%", "運用リターン +5~10%"]],
    [["需要予測", "レコメンド最適化", "価格最適化"], ["時系列予測 (Prophet, TFT)", "レコメンド(Transformer", "/ DeepRec)", "強化学習 (価格最適化)"], ["購買履歴", "Web行動ログ", "在庫・商品データ"], ["在庫回転率 +20~30%", "CVR +10~20%", "粗利率 +5~10%"]],
    [["画像診断支援", "創薬（分子設計）", "患者リスク予測"], ["画像認識 (ResNet / ViT)", "生成モデル (Diffusion)", "生存分析 (DeepSurv)"], ["医用画像", "電子カルテ (EHR)", "ゲノム・バイタル"], ["診断精度 +10~20%", "創薬期間 -30~50%", "再入院率 -15~25%"]],
    [["需給予測", "設備異常予測", "最適運用（EMS）"], ["時系列予測(Transformer)", "異常検知 (Isolation F.)", "/ One-Class SVM", "最適化 (RL / MPC)"], ["気象データ", "設備センサーデータ", "需給・市場データ"], ["予測誤差 -20~40%", "設備停止 -25~35%", "運用コスト -10~20%"]],
    [["配送ルート最適化", "ETA予測", "倉庫作業最適化"], ["経路最適化 (VRP / GNN)", "時系列予測 (TFT)", "強化学習（動的配車）"], ["GPS / 位置情報", "交通・道路状況", "需要・在庫データ"], ["配送コスト -10~20%", "遅延率 -20~30%", "積載率 +10~20%"]],
    [["レコメンド最適化", "トラフィック予測", "生成コンテンツ制作"], ["推薦モデル（DeepFM）", "時系列予測 (NBEATS)", "生成モデル (Diffusion)"], ["視聴行動データ", "ネットワークログ", "コンテンツメタデータ"], ["継続時間 +10~20%", "回線効率 +15~25%", "制作コスト -20~40%"]],
    [["防災・災害予測", "政策立案支援（EBPM）", "行政サービス最適化"], ["時空間予測 (ConvLSTM)", "自然言語処理 / LLM", "最適化シミュレーション"], ["気象・地理データ", "住民データ", "行政文書・議事データ"], ["避難予測 +20~30%", "業務工数 -30~40%", "住民満足度 +10~20%"]]
];
matrix.forEach((column, i) => {
    const x = 106 + i * 125;
    sectorIcon(i, x + 40, 587, "#c4d4f3");
    text(x + 55, 592, sectors[i], i === 6 ? "w xs" : "w s");
    column.forEach((cell, row) => {
        const lines = row === 0 ? cell.map(line => "・" + line) : cell;
        text(x + 8, rowTops[row] + 18, lines, row === 1 || i === 0 ? "xs" : "s", row === 0 ? 20 : 18);
    });
    path(`M${x} 603v301`, "#d5d8e3");
});
rowTops.forEach(y => path(`M12 ${y}h1100`, "#cdd1df"));
rect(12, 570, 1100, 334, "none", "#c5cada");

// 4. Maturity curves
text(12, 939, "4. 業界別 AI 成熟度カーブ（導入ステージ別分布）", "h");
path("M57 960v208h370M57 958l-4 8h8z", "#777d92", 2);
text(20, 966, "成熟度", "xs");
["100%", "75%", "50%", "25%", "0%"].forEach((label, i) => text(24, 984 + i * 45, label, "s"));
const curves = [
    ["#35499d", 1156, 975, 205], ["#3c8e99", 1149, 993, 260], ["#dfad42", 1144, 984, 280], ["#7db78c", 1140, 1004, 280],
    ["#d6627d", 1115, 974, 170], ["#e6a040", 1153, 1015, 270], ["#6541a0", 1160, 1036, 300], ["#b78c9c", 1162, 1047, 290]
];
curves.forEach(([color, start, end, bend]) => {
    path(`M77 ${start}C${bend} ${start - 20} ${bend - 50} ${end} 399 ${end}`, color, 2);
    circle(77, start, 3, color);
    circle(399, end, 3, color);
});
sectors.forEach((name, i) => {
    const y = 969 + i * 21;
    path(`M424 ${y}h10`, colors[i], 2);
    circle(429, y, 3, colors[i]);
    text(441, y + 4, name, "s");
});
["検証期", "試験導入期", "本格導入期", "拡大・最適期"].forEach((label, i) => text(90 + i * 98, 1186, label, "b s mid"));
["(PoC中心)", "(部分適用)", "(全社展開)", "(自律・エコシステム)"].forEach((label, i) => text(90 + i * 98, 1201, label, "xs mid"));
rect(12, 1217, 430, 24, "#f0f0f6");
text(18, 1234, "示唆：金融・小売・通信は先行、製造・エネルギーはデータ統合が拡大加速の鍵", "s");
path("M526 930v310", "#d5d7e2");

// 5. ROI matrix
text(546, 939, "5. AI 投資対効果マトリクス（ROI インパクト × 実現難易度）", "h");
path("M588 985v238h354M588 980l-4 9h8zM755 955v266M588 1105h364", "#b2b7c7");
text(556, 971, "高", "b");
text(556, 1224, "低", "b");
text(557, 1051, ["ROI", "インパクト", "(費用対効果)"], "xs mid", 16);
text(660, 970, ["Quick Win", "（早期成果領域）"], "b teal mid s", 16);
text(847, 970, ["Strategic Bet", "（戦略的投資領域）"], "b purple mid s", 16);
text(664, 1124, "効率化領域", "b teal mid");
text(849, 1124, "構造改革領域", "b mid");
const dots = [
    [606, 1029, 3, "#a7b4bd", "小売・EC", "(需要予測)"], [606, 1066, 7, "#55a5a6", "金融", "(不正検知)"],
    [801, 1011, 10, "#f4b443", "ヘルスケア", "（創薬・個別化医療）"], [775, 1052, 9, "#f09452", "製造", "（自律生産・設計最適化）"],
    [820, 1086, 6, "#f1a78c", "エネルギー", "（需給最適運用）"], [608, 1156, 6, "#91c48d", "通信・メディア", "（レコメンド）"],
    [625, 1197, 6, "#91c48d", "公共・行政", "(業務自動化)"], [775, 1162, 8, "#f7cf62", "物流・運輸", "（自動運転・倉庫統合）"]
];
dots.forEach(([x, y, r, color, name, note]) => {
    circle(x, y, r, color);
    text(x + 20, y - 2, [name, note], "s", 15);
});
text(602, 1241, "低", "b");
text(665, 1241, "実現難易度（データ・技術・組織の複雑性）", "b s");
text(922, 1241, "高", "b");
text(582, 1259, "※ 円の大きさは市場規模、色はデータ利用成熟度（青：高 → 赤：低）", "s");
rect(969, 956, 142, 290, "#fff", "#d4d7e2");
text(1040, 972, "ROI 計算の基本式", "b s mid");
text(980, 995, "ROI =", "s");
text(980, 1014, "(便益 - コスト)", "s");
path("M980 1018h72", "#30343f");
text(1000, 1031, "コスト", "s");
text(1062, 1022, "×100 (%)", "xs");
text(980, 1056, ["便益の例：", "・コスト削減額", "・売上増加額", "・リスク低減額", "・意思決定高速化による", "　機会損失抑制"], "s", 16);
text(980, 1154, ["コスト内訳：", "・システム導入費", "・運用保守費", "・データ整備費", "・人材教育費", "・リスク対応費"], "s", 16);

// 6. Reference architecture
text(12, 1302, "6. 参考アーキテクチャ（AI 活用の技術スタック）", "h");
const stacks = [
    [12, 96, "#315a9d", "データソース", [["業務システム", "(ERP / CRM / MES)"], ["IoT / センサー"], ["Web / アプリログ"], ["外部データ", "(気象・市場・SNS等)"], ["ドキュメント / 画像", "/ 動画 / 音声"]]],
    [122, 104, "#1a2c60", "データ基盤", [["データ収集 (Ingestion)"], ["データレイク / DWH"], ["データ整形・品質", "(ETL / ELT)"], ["特徴量ストア", "(Feature Store)"], ["メタデータ管理", "(Data Catalog)"]]],
    [239, 110, "#1c3267", "モデリング基盤", [["実験管理", "(Experiment Tracking)"], ["モデル学習", "(分散・自動・転移学習)"], ["モデル管理 (Registry)", "バージョン管理・評価"], ["評価・説明性"], ["チューニング", "(AutoML / HPO)"]]],
    [362, 106, "#1b2d60", "運用・統合基盤", [["API / マイクロサービス"], ["オンライン推論", "(リアルタイム)"], ["バッチ推論", "(定期実行)"], ["モニタリング", "(性能・ドリフト検知)"], ["アクセス / セキュリティ"]]],
    [482, 88, "#a8aab4", "活用レイヤ", [["ダッシュボード", "/ 可視化"], ["業務アプリ連携", "(業務自動化)"], ["意思決定支援", "(シミュレーション)"], ["自動化・自律化", "(エージェント)"]]]
];
stacks.forEach(([x, w, color, title, items], i) => {
    rect(x, 1314, w, 213, "#fbfbfe", "#cfd3df");
    rect(x, 1314, w, 24, color, "none", 3);
    text(x + w / 2, 1331, title, "w mid");
    items.forEach((item, n) => {
        const y = 1356 + n * (i === 4 ? 44 : 36);
        const first = item.length > 1 ? y : y + 6;
        if (i === 0 || i === 4) {
            circle(x + 11, y + 2, 6, "none", "#626b82");
            path(`M${x + 7} ${y + 2}h8`, "#626b82", 2);
            text(x + 20, first, item, "xs", 12);
        } else {
            rect(x + 4, y - 12, w - 8, 30, "#fff", "#d9dce6");
            text(x + w / 2, first, item, "xs mid", 12);
        }
    });
    if (i < 4) text(x + w + 2, 1359, "›", "b");
});
rect(18, 1536, 543, 26, "#d6e0f5");
text(290, 1553, "ガバナンス & セキュリティ（データ品質 / 説明性 / 監査性 / プライバシー保護 / コンプライアンス）", "s mid");
path("M595 1290v275", "#cdd1df");

// 7. Success factors and risks
text(619, 1302, "7. 成功要因と主要リスク", "h");
rect(613, 1315, 498, 231, "#fff", "#ced2df");
path("M862 1322v217", "#d7dae5");
text(735, 1342, "成功要因（Key Success Factors）", "b s mid");
text(983, 1342, "主要リスク（Risk Areas）", "b s mid");
const factors = ["経営戦略とのアラインメント（AI は経営課題解決）", "高品質データの継続的パイプライン構築", "小さく始め大きく育てる（PoC → スケール戦略）", "MLOps / LLMOpsによる継続的改善サイクル", "現場と共創するマインドセットの醸成", "AIリスクガバナンスと人材育成"];
const risks = ["データ品質・バイアスによる誤判断", "モデルのブラックボックス化と説明責任", "セキュリティ・プライバシー侵害", "法規・倫理対応（個人情報保護法等）", "AI への過信・ガバナンス不足", "人材不足・スキルギャップ"];
factors.forEach((item, i) => {
    const y = 1366 + i * 29;
    rect(623, y - 7, 13, 13, "#e9effb", "#36579b", 2);
    path(`M626 ${y}l3 3 5-7`, "#36579b", 2);
    text(643, y + 5, item, i === 0 || i === 2 ? "xs" : "s");
});
risks.forEach((item, i) => {
    const y = 1366 + i * 29;
    path(`M886 ${y - 8}l8 14h-16zM886 ${y - 3}v5`, "#d9636e", 2);
    text(902, y + 5, item, "s");
});

// Footer
rect(0, 1577, 1125, 127, "#061234");
path("M18 1665h51M21 1662v-14h8v14M33 1662v-22h8v22M45 1662v-30h8v30M57 1662v-38h8v38M20 1642q24-6 42-28M54 1613h10v10", "#9aa5c3", 2);
text(86, 1626, ["AI は「点の改善」から「面の変革」へ、そして「業界エコシステムの再構築」へ。", "データとモデルの力で、持続的な競争優位と社会的価値の両立を実現する。"], "w", 30);
rect(597, 1593, 516, 98, "#101e46", "#2d447b");
rect(597, 1593, 516, 33, "#1c3871");
text(622, 1614, "経営へのインパクト（中長期）", "w");
const impacts = [[656, "売上成長", "+10 ～ 20%"], [779, "コスト削減", "-10 ～ 30%"], [902, "業務生産性", "+20 ～ 40%"], [1040, "新規価値創出", "新規事業・サービス拡大"]];
impacts.forEach(([x, label, value], i) => {
    text(x, 1648, label, "w mid s");
    text(x, 1675, value, i < 3 ? "w mid big" : "w mid s");
});
path("M716 1634v48M841 1634v48M969 1634v48", "#3c5081");
```
